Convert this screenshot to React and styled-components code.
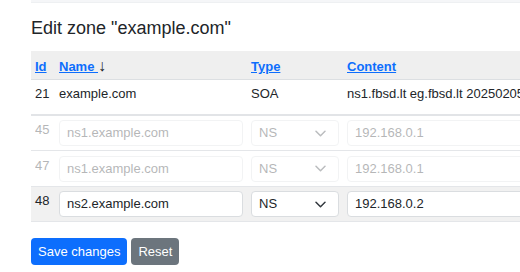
import React from "react";
import styled, { createGlobalStyle } from "styled-components";

const GlobalStyle = createGlobalStyle`
  html, body { margin: 0; padding: 0; background: #fff; overflow: hidden; }
  body {
    font-family: "Liberation Sans", Arial, Helvetica, sans-serif;
    color: #212529;
    font-size: 13px;
  }
  * { box-sizing: border-box; }
`;

const Page = styled.div`
  padding-left: 31px;
  width: 620px;
`;

const TopStrip = styled.div`
  height: 3px;
  background: #f5f6f8;
  border-bottom: 1px solid #eef0f2;
`;

const Title = styled.h1`
  margin: 15px 0 11px;
  font-size: 18px;
  font-weight: 400;
  line-height: 1.2;
`;

const Table = styled.table`
  width: 570px;
  border-collapse: separate;
  border-spacing: 0;
  table-layout: fixed;
  font-size: 13px;
  line-height: 19.5px;
`;

const Th = styled.th`
  background: #efefef;
  text-align: left;
  padding: 6px 4px 2.5px;
  border-bottom: 1px solid #dcdfe2;
  font-weight: 700;
  white-space: nowrap;
`;

const SortLink = styled.a`
  color: #0d6efd;
  text-decoration: underline;
  cursor: pointer;
`;

const Arrow = styled.span`
  font-weight: 400;
  font-size: 16px;
  line-height: 1;
  color: #212529;
`;

const Row = styled.tr`
  background: ${(p) => (p.$active ? "#f1f1f1" : "transparent")};
`;

const Td = styled.td`
  padding: ${(p) => (p.$static ? "4.5px 4px 10px" : "4.5px 4px 4px")};
  border-bottom: ${(p) => (p.$divider ? "2px solid #e2e4e7" : "1px solid #e4e6e9")};
  vertical-align: top;
  white-space: nowrap;
  overflow: hidden;
`;

const Cell = styled.div`
  opacity: ${(p) => (p.$muted ? 0.33 : 1)};
`;

const Input = styled.div`
  height: 26px;
  width: 100%;
  border: 1px solid #dadde0;
  border-radius: 4px;
  background: #fff;
  padding: 0 7px;
  display: flex;
  align-items: center;
  color: #212529;
  font-size: 13px;
  white-space: nowrap;
  overflow: hidden;
`;

const Select = styled(Input)`
  justify-content: space-between;
  padding-right: 12px;
`;

const Actions = styled.div`
  display: flex;
  gap: 4px;
  margin-top: 16px;
`;

const Button = styled.button`
  height: 27px;
  padding: 0 7px;
  border: none;
  border-radius: 4px;
  font-family: inherit;
  font-size: 13px;
  color: #fff;
  background: ${(p) => (p.$variant === "secondary" ? "#6c757d" : "#0d6efd")};
  cursor: pointer;
`;

const Chevron = () => (
  <svg width="11" height="7" viewBox="0 0 11 7" fill="none">
    <path d="M1 1.2l4.5 4.5L10 1.2" stroke="#343a40" strokeWidth="1.5" strokeLinecap="round" strokeLinejoin="round" />
  </svg>
);

const records = [
  { id: 45, name: "ns1.example.com", type: "NS", content: "192.168.0.1", muted: true },
  { id: 47, name: "ns1.example.com", type: "NS", content: "192.168.0.1", muted: true },
  { id: 48, name: "ns2.example.com", type: "NS", content: "192.168.0.2", active: true },
];

export default function App() {
  return (
    <>
      <GlobalStyle />
      <Page>
        <TopStrip />
        <Title>Edit zone "example.com"</Title>
        <Table>
          <colgroup>
            <col style={{ width: 24 }} />
            <col style={{ width: 192 }} />
            <col style={{ width: 96 }} />
            <col />
          </colgroup>
          <thead>
            <tr>
              <Th><SortLink>Id</SortLink></Th>
              <Th><SortLink>Name </SortLink><Arrow>↓</Arrow></Th>
              <Th><SortLink>Type</SortLink></Th>
              <Th><SortLink>Content</SortLink></Th>
            </tr>
          </thead>
          <tbody>
            <Row>
              <Td $static $divider>21</Td>
              <Td $static $divider>example.com</Td>
              <Td $static $divider>SOA</Td>
              <Td $static $divider>ns1.fbsd.lt eg.fbsd.lt 2025020501 10800 3600 604800 3600</Td>
            </Row>
            {records.map((r) => (
              <Row key={r.id} $active={r.active}>
                <Td><Cell $muted={r.muted}>{r.id}</Cell></Td>
                <Td><Cell $muted={r.muted}><Input>{r.name}</Input></Cell></Td>
                <Td>
                  <Cell $muted={r.muted}>
                    <Select>
                      <span>{r.type}</span>
                      <Chevron />
                    </Select>
                  </Cell>
                </Td>
                <Td><Cell $muted={r.muted}><Input>{r.content}</Input></Cell></Td>
              </Row>
            ))}
          </tbody>
        </Table>
        <Actions>
          <Button>Save changes</Button>
          <Button $variant="secondary">Reset</Button>
        </Actions>
      </Page>
    </>
  );
}
